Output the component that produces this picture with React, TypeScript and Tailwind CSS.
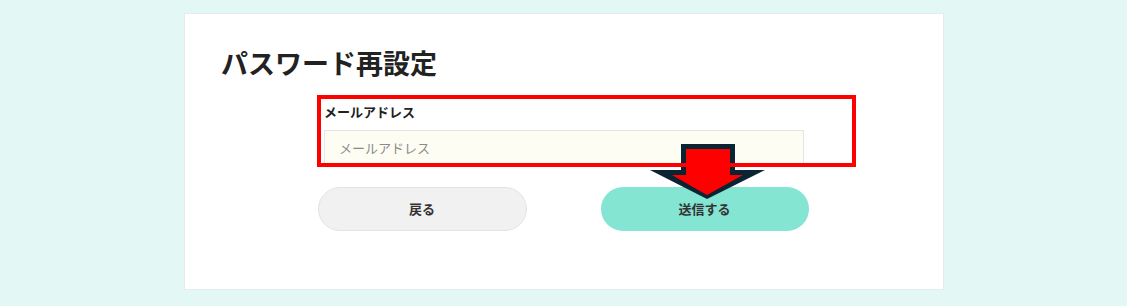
export default function App() {
  const font = { fontFamily: '"Noto Sans CJK JP", "Noto Sans", sans-serif' };
  return (
    <div className="min-h-[306px] w-full bg-[#e3f7f5] pt-[13px]" style={font}>
      <div className="relative ml-[184px] h-[277px] w-[760px] border border-[#e6eceb] bg-white">
        <h1 className="ml-[36px] mt-[34px] text-[27px] font-bold leading-[30px] text-[#222]">
          パスワード再設定
        </h1>

        <form className="mx-auto mt-[25px] w-[480px]" onSubmit={(e) => e.preventDefault()}>
          <label className="block text-[13px] font-bold leading-[18px] text-[#222]">
            メールアドレス
          </label>
          <input
            type="email"
            placeholder="メールアドレス"
            className="mt-[9px] block h-[35px] w-full border border-[#e5e5e5] bg-[#fdfdf4] px-[14px] text-[13px] text-[#333] outline-none placeholder:text-[#8a8a8a]"
          />
        </form>

        <div className="mt-[22px] flex justify-center gap-[74px] pr-[2px]">
          <button className="h-[44px] w-[209px] rounded-full border border-[#e3e3e3] bg-[#f1f1f1] text-[13px] font-bold text-[#333]">
            戻る
          </button>
          <button className="h-[44px] w-[208px] rounded-full bg-[#84e5d3] text-[13px] font-bold text-[#333]">
            送信する
          </button>
        </div>

        {/* annotation: arrow */}
        <svg
          className="absolute left-[465px] top-[130px]"
          width="115"
          height="56"
          viewBox="0 0 115 56"
        >
          <polygon points="31,0 85,0 85,26 115,26 57,55 0,26 31,26" fill="#0b2433" />
          <polygon points="36,5 80,5 80,31 93,31 57,51 22,31 36,31" fill="#ff0000" />
        </svg>

        {/* annotation: red frame */}
        <div className="pointer-events-none absolute left-[132px] top-[81px] h-[72px] w-[539px] border-4 border-[#ff0000]" />
      </div>
    </div>
  );
}
